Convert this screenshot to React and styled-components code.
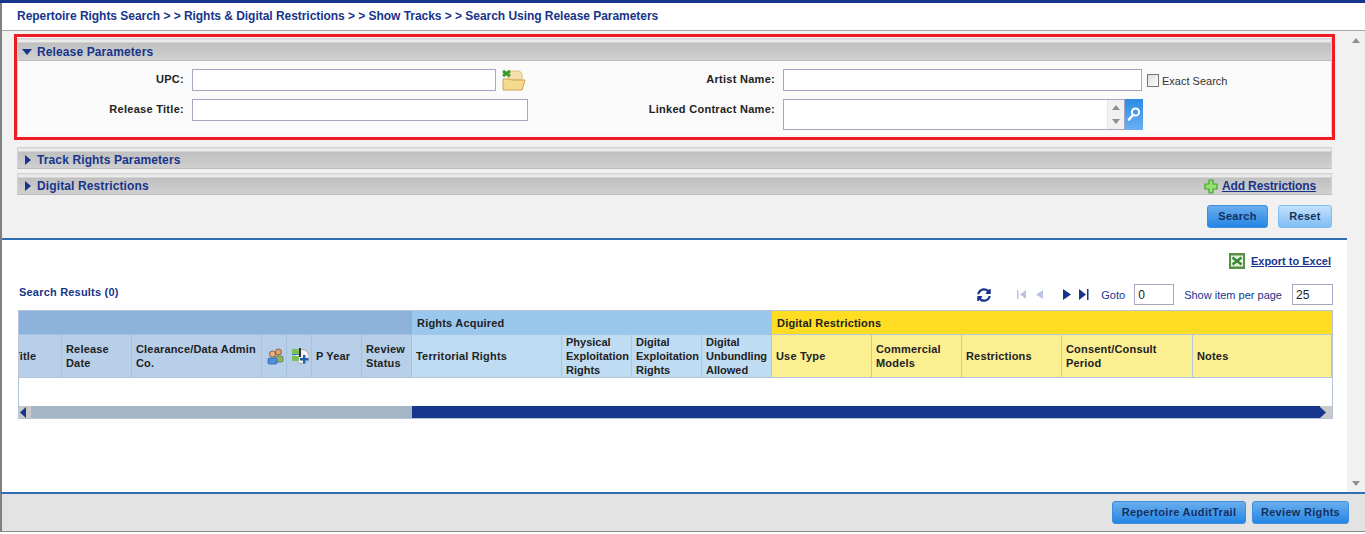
import styled, { createGlobalStyle } from "styled-components";
import { FaSyncAlt } from "react-icons/fa";

const GlobalStyle = createGlobalStyle`
  html, body {
    margin: 0;
    padding: 0;
    height: 534px;
    overflow: hidden;
    background: #fff;
    font-family: "Liberation Sans", Arial, sans-serif;
  }
  * { box-sizing: border-box; }
`;

const Page = styled.div`
  width: 1365px;
  height: 532px;
  display: flex;
  flex-direction: column;
  border-top: 3px solid #17358a;
  border-bottom: 1px solid #8a8a8a;
`;

const Middle = styled.div`
  flex: 1;
  min-height: 0;
  display: flex;
  flex-direction: column;
  border-left: 2px solid #808080;
`;

const BodyRow = styled.div`
  flex: 1;
  min-height: 0;
  display: flex;
`;

const Main = styled.div`
  flex: 1;
  min-width: 0;
  display: flex;
  flex-direction: column;
`;

const Breadcrumb = styled.div`
  height: 28px;
  flex: none;
  padding: 6px 0 0 15px;
  background: #fff;
  border-bottom: 1px solid #a8a8a8;
  color: #17358a;
  font-size: 12px;
  font-weight: bold;
  line-height: 15px;
  letter-spacing: -0.04px;
`;

const SearchArea = styled.div`
  height: 209px;
  background: #f1f1f1;
  border-bottom: 2px solid #2f6db5;
  padding: 3px 15px 0;
  display: flex;
  flex-direction: column;
`;

const RedFrame = styled.div`
  height: 106px;
  margin: 0 -3px;
  padding: 1px 0;
  border: 3px solid #ed1c24;
  background: #f6f6f6;
`;

const SectionHeader = styled.div`
  height: ${({ $h }) => $h || 22}px;
  margin-top: ${({ $mt }) => $mt || 0}px;
  display: flex;
  align-items: center;
  padding: 4px 15px 0 0;
  border: 1px solid #d2d2d2;
  border-bottom: 1px solid #bdbdbd;
  background: linear-gradient(#dcdcdc 0, #f0f0f0 2px, #e6e6e6 3px, #c0c0c0 4px, #d0d0d0 100%);
  color: #17358a;
  font-size: 12px;
  font-weight: bold;
  letter-spacing: 0.12px;
`;

const CaretSlot = styled.span`
  width: 19px;
  flex: none;
  display: flex;
  padding-left: ${({ $down }) => ($down ? 4 : 7)}px;
`;

const Caret = styled.svg`
  height: 10px;
  width: ${({ $w }) => $w}px;
  fill: #17358a;
`;

const AddLink = styled.a`
  margin-left: auto;
  display: flex;
  align-items: center;
  gap: 4px;
  color: #17358a;
  font-size: 12px;
  font-weight: bold;
  letter-spacing: -0.12px;
  text-decoration: underline;
`;

const FormGrid = styled.div`
  height: 74px;
  background: #fafafa;
  box-shadow: inset -1px 0 0 #d2d2d2, inset 1px 0 0 #d2d2d2;
  display: grid;
  grid-template-columns: 175px 336px 255px 1fr;
  grid-template-rows: 30px 32px;
  padding-top: 8px;
`;

const Label = styled.label`
  padding: 4px 8px 0 0;
  text-align: right;
  color: #222;
  font-size: 11px;
  font-weight: bold;
  letter-spacing: 0.28px;
`;

const FieldRow = styled.div`
  display: flex;
  align-items: flex-start;
`;

const TextInput = styled.input`
  width: ${({ $w }) => $w}px;
  height: ${({ $h }) => $h || 22}px;
  border: 1px solid #a6a6c4;
  background: #fff;
  padding: 0 3px;
  font: 12px "Liberation Sans", Arial, sans-serif;
  color: #222;
  outline: none;
`;

const TextArea = styled.div`
  width: 342px;
  height: 31px;
  border: 1px solid #a6a6c4;
  background: #fff;
  display: flex;
  justify-content: flex-end;
`;

const SpinColumn = styled.div`
  width: 17px;
  background: #f1f1f1;
  border-left: 1px solid #e6e6e6;
  display: flex;
  flex-direction: column;
  justify-content: space-between;
  align-items: center;
  padding: 5px 0;
`;

const MiniArrow = styled.svg`
  width: 8px;
  height: 5px;
  fill: #8f8f8f;
`;

const LookupButton = styled.div`
  width: 18px;
  height: 31px;
  background: linear-gradient(#2d8be6, #69b0f2);
  display: flex;
  align-items: center;
  justify-content: center;
`;

const ExactBox = styled.div`
  margin: 5px 0 0 5px;
  width: 12px;
  height: 13px;
  border: 1px solid #777;
  background: linear-gradient(135deg, #ddd, #fff);
`;

const ExactLabel = styled.span`
  margin: 6px 0 0 3px;
  font-size: 11px;
  color: #333;
`;

const FolderSlot = styled.div`
  margin: 0 0 0 6px;
  display: flex;
`;

const ActionRow = styled.div`
  display: flex;
  justify-content: flex-end;
  gap: 10px;
  margin-top: 10px;
`;

const Button = styled.button`
  height: 23px;
  width: ${({ $w }) => $w}px;
  padding: 0 0 2px;
  border: 1px solid ${({ $light }) => ($light ? "#7dbcf5" : "#3f8ddb")};
  border-radius: 3px;
  background: ${({ $light }) =>
    $light ? "linear-gradient(#c4e1fb, #7fbdf5)" : "linear-gradient(#6aaeee, #2586e4)"};
  color: #14305f;
  font: bold 11px "Liberation Sans", Arial, sans-serif;
  letter-spacing: 0.3px;
`;

const Results = styled.div`
  flex: 1;
  background: #fff;
  padding: 0 14px 0 16px;
  display: flex;
  flex-direction: column;
`;

const ExportRow = styled.div`
  display: flex;
  justify-content: flex-end;
  align-items: center;
  gap: 6px;
  height: 16px;
  margin: 13px 2px 0 0;
`;

const BlueLink = styled.a`
  color: #17358a;
  font-size: 11px;
  font-weight: bold;
  text-decoration: underline;
`;

const PagerRow = styled.div`
  display: flex;
  align-items: center;
  height: 21px;
  margin-top: 15px;
`;

const ResultsTitle = styled.div`
  margin: 0 auto 5px 1px;
  color: #17358a;
  font-size: 11px;
  font-weight: bold;
  letter-spacing: 0.2px;
`;

const PagerIcon = styled.svg`
  flex: none;
  height: 11px;
  width: ${({ $w }) => $w || 9}px;
  margin-right: ${({ $mr }) => $mr || 0}px;
  fill: ${({ $off }) => ($off ? "#b9c4de" : "#17358a")};
`;

const RefreshIcon = styled(FaSyncAlt)`
  flex: none;
  margin-right: 26px;
  color: #17358a;
`;

const PagerText = styled.span`
  color: #17358a;
  font-size: 11px;
  margin-left: ${({ $ml }) => $ml || 0}px;
  margin-right: ${({ $mr }) => $mr}px;
`;

const TableFrame = styled.div`
  width: 1315px;
  margin-top: 5px;
  border: 1px solid #b5c4db;
  display: flex;
  flex-direction: column;
  background: #fff;
`;

const GroupRow = styled.div`
  display: grid;
  grid-template-columns: 393px 360px 1fr;
  height: 23px;
`;

const GroupCell = styled.div`
  background: ${({ $bg }) => $bg};
  color: #222;
  font-size: 11px;
  font-weight: bold;
  letter-spacing: 0.2px;
  line-height: 24px;
  padding-left: 5px;
`;

const HeadRow = styled.div`
  display: flex;
  height: 44px;
  border-bottom: 1px solid #b5c4db;
`;

const HeadCell = styled.div`
  width: ${({ $w }) => $w}px;
  flex: ${({ $grow }) => ($grow ? 1 : "none")};
  overflow: hidden;
  display: flex;
  align-items: center;
  padding-left: ${({ $pl }) => ($pl === undefined ? 4 : $pl)}px;
  background: ${({ $bg }) => $bg};
  border-right: 1px solid ${({ $line }) => $line};
  border-top: 1px solid ${({ $line }) => $line};
  color: #222;
  font-size: 11px;
  font-weight: bold;
  letter-spacing: ${({ $tight }) => ($tight ? 0 : 0.18)}px;
  line-height: 14px;
`;

const ClippedTitle = styled.span`
  margin-left: -6px;
`;

const EmptyBody = styled.div`
  height: 28px;
  background: #fff;
`;

const HScroll = styled.div`
  height: 12px;
  display: flex;
`;

const ScrollEnd = styled.div`
  width: 12px;
  background: #c9c9c9;
  display: flex;
  align-items: center;
  justify-content: flex-start;
`;

const ScrollTrack = styled.div`
  width: 381px;
  background: #a4b5c6;
`;

const ScrollThumb = styled.div`
  flex: 1;
  background: #17358a;
`;

const ScrollColumn = styled.div`
  width: 18px;
  flex: none;
  background: #f1f1f1;
  display: flex;
  flex-direction: column;
  justify-content: space-between;
  align-items: center;
  padding: 7px 0 6px;
`;

const Footer = styled.div`
  height: 39px;
  flex: none;
  display: flex;
  justify-content: flex-end;
  gap: 6px;
  padding: 7px 16px 0 0;
  background: #e3e3e3;
  border-top: 2px solid #2f6db5;
  border-left: 2px solid #808080;
`;

const groupBlue = { $bg: "#b8cfe9", $line: "#a7c0de" };
const rightsBlue = { $bg: "#c0dcf3", $line: "#a7c6e3" };
const yellow = { $bg: "#fbef92", $line: "#b7c9dc" };

const columns = [
  { w: 43, label: <ClippedTitle>Title</ClippedTitle>, pl: 0, ...groupBlue },
  { w: 70, label: <>Release<br />Date</>, ...groupBlue },
  { w: 130, label: <>Clearance/Data Admin<br />Co.</>, ...groupBlue },
  { w: 25, icon: "people", pl: 5, ...groupBlue },
  { w: 25, icon: "chart", pl: 5, ...groupBlue },
  { w: 50, label: "P Year", ...groupBlue },
  { w: 50, label: <>Review<br />Status</>, ...groupBlue },
  { w: 150, label: "Territorial Rights", ...rightsBlue },
  { w: 70, tight: true, label: <>Physical<br />Exploitation<br />Rights</>, ...rightsBlue },
  { w: 70, tight: true, label: <>Digital<br />Exploitation<br />Rights</>, ...rightsBlue },
  { w: 70, tight: true, label: <>Digital<br />Unbundling<br />Allowed</>, ...rightsBlue },
  { w: 100, label: "Use Type", ...yellow },
  { w: 90, label: <>Commercial<br />Models</>, ...yellow },
  { w: 100, label: "Restrictions", ...yellow },
  { w: 131, label: <>Consent/Consult<br />Period</>, ...yellow },
  { grow: true, label: "Notes", ...yellow },
];

function FolderIcon() {
  return (
    <svg width="24" height="22" viewBox="0 0 24 22">
      <path d="M6 2h10q3 0 4 3v6H6z" fill="#f3e0ab" stroke="#dcc07a" />
      <path d="M1 10h7l1 1h14l-3 10H1z" fill="#f5d98c" stroke="#c9a456" />
      <path d="M1 2l7 5M8 2L1 7" stroke="#3c9a2a" strokeWidth="3" />
    </svg>
  );
}

function PeopleIcon() {
  return (
    <svg width="17" height="17" viewBox="0 0 17 17">
      <circle cx="11.5" cy="4" r="3" fill="#e0a56f" stroke="#7a4a24" strokeWidth=".8" />
      <rect x="8" y="8" width="8" height="6" rx="1.5" fill="#8db35f" stroke="#5d7f3a" strokeWidth=".8" />
      <circle cx="5.5" cy="6" r="3" fill="#eeb07c" stroke="#7a4a24" strokeWidth=".8" />
      <rect x="1" y="10" width="9" height="6" rx="1.5" fill="#4f90d8" stroke="#2a5ea8" strokeWidth=".8" />
    </svg>
  );
}

function ChartIcon() {
  return (
    <svg width="17" height="17" viewBox="0 0 17 17">
      <circle cx="10" cy="8.5" r="7" fill="#f4f4f4" stroke="#9a9a9a" strokeWidth=".8" />
      <rect x="0" y="1" width="7" height="5" fill="#7fbf5a" />
      <rect x="0" y="6" width="7" height="1" fill="#3f7fd0" />
      <rect x="0" y="8" width="7" height="5" fill="#7fbf5a" />
      <rect x="7" y="0" width="2" height="9" fill="#333" />
      <path d="M8 10h3V7h2.4v3h3v2.4h-3v3H11v-3H8z" fill="#1b5fae" />
    </svg>
  );
}

function ExcelIcon() {
  return (
    <svg width="16" height="16" viewBox="0 0 16 16">
      <rect width="16" height="16" fill="#5a8f46" />
      <rect x="2" y="2.5" width="12" height="11" fill="#e3efdc" />
      <path d="M3.5 4.5l9 7M12.5 4.5l-9 7" stroke="#3a8a35" strokeWidth="2.4" />
    </svg>
  );
}

function PlusIcon() {
  return (
    <svg width="14" height="15" viewBox="0 0 14 15">
      <path d="M5 1h4v4h4v5H9v4H5v-4H1V5h4z" fill="#96e070" stroke="#3fa52c" strokeWidth="1.2" strokeLinejoin="round" />
    </svg>
  );
}

function SearchGlass() {
  return (
    <svg width="14" height="17" viewBox="0 0 14 17">
      <circle cx="8.5" cy="6" r="3.6" fill="none" stroke="#fff" strokeWidth="2" />
      <path d="M6 9l-4 4.5" stroke="#fff" strokeWidth="2.6" strokeLinecap="round" />
    </svg>
  );
}

function RightCaret() {
  return (
    <CaretSlot>
      <Caret $w={6} viewBox="0 0 6 10"><path d="M0 0l6 5-6 5z" /></Caret>
    </CaretSlot>
  );
}

export default function App() {
  return (
    <Page>
      <GlobalStyle />
      <Middle>
        <Breadcrumb>
          Repertoire Rights Search &gt; &gt; Rights &amp; Digital Restrictions &gt; &gt; Show Tracks &gt; &gt; Search Using Release Parameters
        </Breadcrumb>
        <BodyRow>
          <Main>
            <SearchArea>
              <RedFrame>
                <SectionHeader $h={23}>
                  <CaretSlot $down>
                    <Caret $w={10} viewBox="0 0 10 10"><path d="M0 2h10L5 8z" /></Caret>
                  </CaretSlot>
                  Release Parameters
                </SectionHeader>
                <FormGrid>
                  <Label>UPC:</Label>
                  <FieldRow>
                    <TextInput $w={304} />
                    <FolderSlot><FolderIcon /></FolderSlot>
                  </FieldRow>
                  <Label>Artist Name:</Label>
                  <FieldRow>
                    <TextInput $w={359} />
                    <ExactBox />
                    <ExactLabel>Exact Search</ExactLabel>
                  </FieldRow>
                  <Label>Release Title:</Label>
                  <FieldRow>
                    <TextInput $w={336} />
                  </FieldRow>
                  <Label>Linked Contract Name:</Label>
                  <FieldRow>
                    <TextArea>
                      <SpinColumn>
                        <MiniArrow viewBox="0 0 8 5"><path d="M4 0l4 5H0z" /></MiniArrow>
                        <MiniArrow viewBox="0 0 8 5"><path d="M0 0h8L4 5z" /></MiniArrow>
                      </SpinColumn>
                    </TextArea>
                    <LookupButton><SearchGlass /></LookupButton>
                  </FieldRow>
                </FormGrid>
              </RedFrame>
              <SectionHeader $mt={7}>
                <RightCaret />
                Track Rights Parameters
              </SectionHeader>
              <SectionHeader $mt={4}>
                <RightCaret />
                Digital Restrictions
                <AddLink href="#"><PlusIcon />Add Restrictions</AddLink>
              </SectionHeader>
              <ActionRow>
                <Button $w={61}>Search</Button>
                <Button $w={54} $light>Reset</Button>
              </ActionRow>
            </SearchArea>
            <Results>
              <ExportRow>
                <ExcelIcon />
                <BlueLink href="#">Export to Excel</BlueLink>
              </ExportRow>
              <PagerRow>
                <ResultsTitle>Search Results (0)</ResultsTitle>
                <RefreshIcon size={14} />
                <PagerIcon $off $w={9} $mr={9} viewBox="0 0 9 11"><path d="M0 1h1.5v9H0zM9 1v9L3 5.5z" /></PagerIcon>
                <PagerIcon $off $w={8} $mr={20} viewBox="0 0 8 11"><path d="M8 1v9L1 5.5z" /></PagerIcon>
                <PagerIcon $w={9} $mr={7} viewBox="0 0 9 11"><path d="M0 0v11l8-5.5z" /></PagerIcon>
                <PagerIcon $w={10} $mr={12} viewBox="0 0 10 11"><path d="M0 0v11l7-5.5zM8 0h1.5v11H8z" /></PagerIcon>
                <PagerText $mr={9}>Goto</PagerText>
                <TextInput $w={40} $h={21} defaultValue="0" />
                <PagerText $ml={10} $mr={10}>Show item per page</PagerText>
                <TextInput $w={41} $h={21} defaultValue="25" />
              </PagerRow>
              <TableFrame>
                <GroupRow>
                  <GroupCell $bg="#8db2dc" />
                  <GroupCell $bg="#9ac7ee">Rights Acquired</GroupCell>
                  <GroupCell $bg="#ffdd22">Digital Restrictions</GroupCell>
                </GroupRow>
                <HeadRow>
                  {columns.map((col, i) => (
                    <HeadCell key={i} $w={col.w} $grow={col.grow} $pl={col.pl} $tight={col.tight} $bg={col.$bg} $line={col.$line}>
                      {col.icon === "people" && <PeopleIcon />}
                      {col.icon === "chart" && <ChartIcon />}
                      {col.label && <span>{col.label}</span>}
                    </HeadCell>
                  ))}
                </HeadRow>
                <EmptyBody />
                <HScroll>
                  <ScrollEnd>
                    <svg width="8" height="11" viewBox="0 0 8 11" fill="#17358a"><path d="M7 0v11L1 5.5z" /></svg>
                  </ScrollEnd>
                  <ScrollTrack />
                  <ScrollThumb />
                  <ScrollEnd>
                    <svg width="8" height="11" viewBox="0 0 8 11" fill="#17358a"><path d="M0 0v11l6-5.5z" /></svg>
                  </ScrollEnd>
                </HScroll>
              </TableFrame>
            </Results>
          </Main>
          <ScrollColumn>
            <MiniArrow viewBox="0 0 8 5"><path d="M4 0l4 5H0z" /></MiniArrow>
            <MiniArrow viewBox="0 0 8 5"><path d="M0 0h8L4 5z" /></MiniArrow>
          </ScrollColumn>
        </BodyRow>
      </Middle>
      <Footer>
        <Button $w={134}>Repertoire AuditTrail</Button>
        <Button $w={97}>Review Rights</Button>
      </Footer>
    </Page>
  );
}
